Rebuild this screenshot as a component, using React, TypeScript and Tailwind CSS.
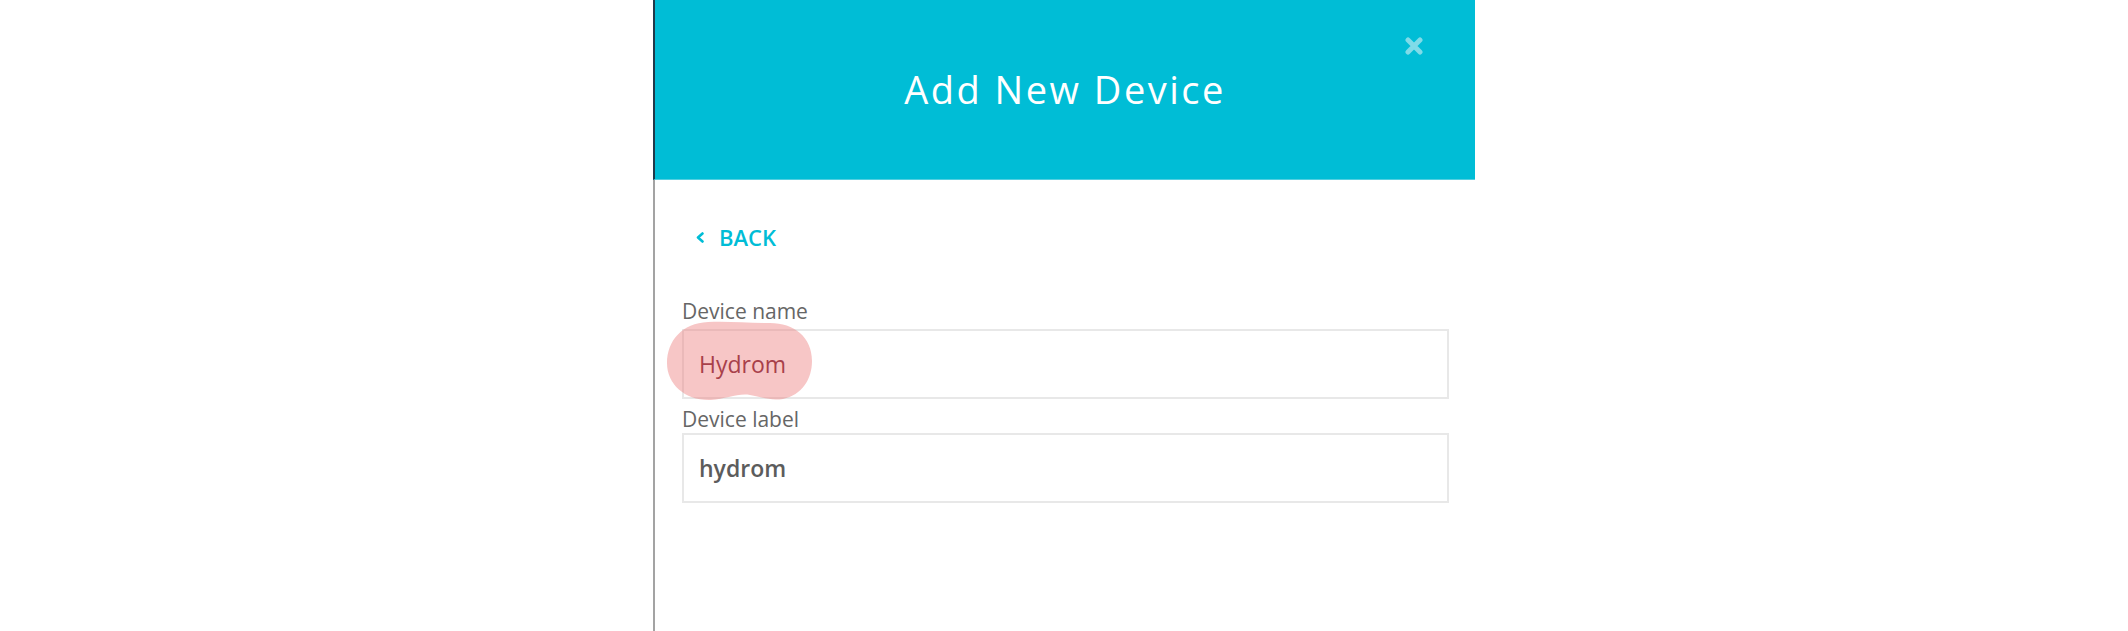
import React from "react";

// Add New Device side panel
const App = () => {
    return (
        <div className="min-h-[631px] w-full bg-white" style={{ fontFamily: '"Open Sans", "Liberation Sans", sans-serif' }}>
            <div className="mx-auto flex h-[631px] w-[822px] flex-col border-l-2 border-[#a3a3a3] bg-white">
                {/* Header */}
                <div className="relative -ml-[2px] h-[180px] border-l-2 border-b border-[#1f3a4a] border-b-[#52cfe0] bg-[#00bdd6] pt-[67px] text-center">
                    <h1 className="text-[38px] leading-[44px] font-normal tracking-[2.5px] text-white">Add New Device</h1>
                    <button className="absolute right-[52px] top-[37px] h-[18px] w-[18px]">
                        <svg viewBox="0 0 18 18" className="h-[18px] w-[18px]">
                            <path d="M3 3 L15 15 M15 3 L3 15" stroke="#80dbe8" strokeWidth="5" strokeLinecap="round" />
                        </svg>
                    </button>
                </div>

                {/* Body */}
                <div className="flex flex-col pl-[27px] pr-[26px]">
                    <a className="mt-[45px] ml-[14px] flex h-[24px] items-center gap-[15px] text-[22px] leading-[24px] font-semibold text-[#00bdd6]">
                        <svg viewBox="0 0 8 11" className="h-[11px] w-[8px]">
                            <polyline points="6.5,1.5 2,5.5 6.5,9.5" fill="none" stroke="#00bdd6" strokeWidth="2.6" strokeLinecap="round" strokeLinejoin="round" />
                        </svg>
                        <span>BACK</span>
                    </a>

                    <label className="mt-[50px] h-[24px] text-[21px] leading-[24px] text-[#666]">Device name</label>
                    <div className="relative mt-[6px] flex h-[70px] items-center border-2 border-[#e8e8e8] pl-[15px]">
                        <svg className="pointer-events-none absolute -left-[18px] -top-[10px]" width="147" height="81" viewBox="0 0 147 81">
                            <path
                                d="M42 1 C16 2 1 20 1 42 C1 64 20 80 45 79 C60 78 72 72 84 74 C96 76 104 80 117 78 C136 74 146 58 146 40 C146 16 128 2 104 2 C82 2 62 0 42 1 Z"
                                fill="rgba(236,120,120,0.42)"
                            />
                        </svg>
                        <span className="relative text-[23px] text-[#a8404a]">Hydrom</span>
                    </div>

                    <label className="mt-[8px] h-[24px] text-[21px] leading-[24px] text-[#666]">Device label</label>
                    <div className="mt-[2px] flex h-[70px] items-center border-2 border-[#e8e8e8] pl-[15px]">
                        <span className="text-[23px] font-semibold text-[#5c5c5c]">hydrom</span>
                    </div>
                </div>
            </div>
        </div>
    );
};

export default App;
